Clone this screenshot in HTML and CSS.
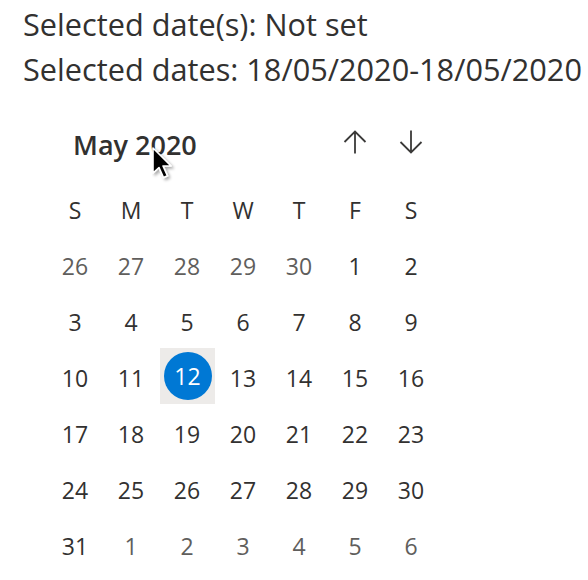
FILE: index.html
```html
<!DOCTYPE html>
<html>
<head>
<meta charset="utf-8">
<link rel="stylesheet" href="styles.css">
</head>
<body>
<div class="info">
  <div class="line">Selected date(s): Not set</div>
  <div class="line">Selected dates: 18/05/2020-18/05/2020</div>
</div>
<div class="calendar">
  <div class="header">
    <div class="title">May 2020</div>
    <div class="nav">
      <button class="navbtn" aria-label="Previous month">
        <svg width="24" height="24" viewBox="0 0 24 24"><path d="M12 1.5V23.5M1.5 12L12 1.5L22.5 12" fill="none" stroke="#3b3a39" stroke-width="1.8"/></svg>
      </button>
      <button class="navbtn" aria-label="Next month">
        <svg width="24" height="24" viewBox="0 0 24 24"><path d="M12 0.5V22.5M1.5 12L12 22.5L22.5 12" fill="none" stroke="#3b3a39" stroke-width="1.8"/></svg>
      </button>
    </div>
  </div>
  <div class="grid">
    <div class="wd">S</div><div class="wd">M</div><div class="wd">T</div><div class="wd">W</div><div class="wd">T</div><div class="wd">F</div><div class="wd">S</div>
    <div class="day out">26</div><div class="day out">27</div><div class="day out">28</div><div class="day out">29</div><div class="day out">30</div><div class="day">1</div><div class="day">2</div>
    <div class="day">3</div><div class="day">4</div><div class="day">5</div><div class="day">6</div><div class="day">7</div><div class="day">8</div><div class="day">9</div>
    <div class="day">10</div><div class="day">11</div><div class="day sel"><span class="today">12</span></div><div class="day">13</div><div class="day">14</div><div class="day">15</div><div class="day">16</div>
    <div class="day">17</div><div class="day">18</div><div class="day">19</div><div class="day">20</div><div class="day">21</div><div class="day">22</div><div class="day">23</div>
    <div class="day">24</div><div class="day">25</div><div class="day">26</div><div class="day">27</div><div class="day">28</div><div class="day">29</div><div class="day">30</div>
    <div class="day">31</div><div class="day out">1</div><div class="day out">2</div><div class="day out">3</div><div class="day out">4</div><div class="day out">5</div><div class="day out">6</div>
  </div>
</div>
<svg class="cursor" width="24" height="36" viewBox="0 0 24 36">
  <defs>
    <filter id="sh" x="-50%" y="-50%" width="200%" height="200%">
      <feDropShadow dx="2" dy="2" stdDeviation="1.5" flood-color="#000" flood-opacity="0.35"/>
    </filter>
  </defs>
  <path d="M1 1V26L7 20.5L11.5 30.5L15.5 28.8L11 19H19Z" fill="#000" stroke="#fff" stroke-width="1.6" stroke-linejoin="round" filter="url(#sh)"/>
</svg>
</body>
</html>
```

FILE: styles.css
```css
html, body {
  margin: 0;
  padding: 0;
  background: #ffffff;
}
body {
  font-family: "Open Sans", "Noto Sans", sans-serif;
  color: #323130;
  width: 588px;
  height: 580px;
  overflow: hidden;
  position: relative;
}
.info {
  padding-left: 23px;
  padding-top: 2px;
}
.line {
  font-size: 30.7px;
  line-height: 45px;
  white-space: nowrap;
  color: #323130;
}
.calendar {
  margin-top: 22px;
  margin-left: 47px;
  width: 392px;
}
.header {
  display: flex;
  align-items: center;
  justify-content: space-between;
  height: 56px;
}
.title {
  font-size: 27px;
  font-weight: 600;
  padding-left: 26px;
  padding-top: 4px;
  color: #323130;
}
.nav {
  display: flex;
}
.navbtn {
  width: 56px;
  height: 56px;
  border: 0;
  background: transparent;
  padding: 0;
  margin: 0;
  display: flex;
  align-items: center;
  justify-content: center;
}
.grid {
  margin-top: 12px;
  display: grid;
  grid-template-columns: repeat(7, 56px);
  grid-auto-rows: 56px;
}
.wd, .day {
  display: flex;
  align-items: center;
  justify-content: center;
  font-size: 23px;
  color: #323130;
}
.day.out {
  color: #605e5c;
}
.day.sel {
  background: #edebe9;
  margin: -2px 0 2px 1px;
}
.today {
  width: 48px;
  height: 48px;
  border-radius: 50%;
  background: #0078d4;
  color: #ffffff;
  display: flex;
  align-items: center;
  justify-content: center;
  font-weight: 500;
}
.cursor {
  position: absolute;
  left: 152px;
  top: 147px;
}
```
